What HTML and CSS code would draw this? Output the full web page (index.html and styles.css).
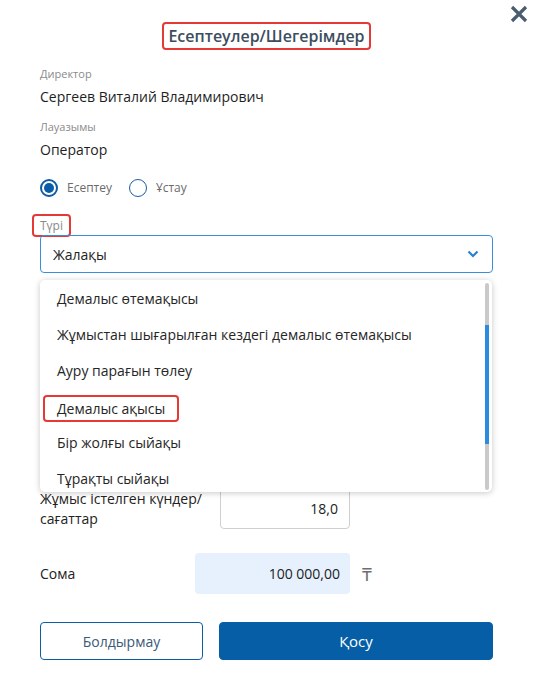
FILE: index.html
```html
<!DOCTYPE html>
<html lang="kk">
<head>
<meta charset="utf-8">
<title>Есептеулер/Шегерімдер</title>
<link rel="stylesheet" href="styles.css">
</head>
<body>
<div class="modal">
  <button class="close" aria-label="Жабу">
    <svg width="18" height="18" viewBox="0 0 18 18"><path d="M2 2 L16 16 M16 2 L2 16" stroke="#4a5d70" stroke-width="3.2" stroke-linecap="butt" fill="none"/></svg>
  </button>
  <div class="header"><span class="title mark">Есептеулер/Шегерімдер</span></div>

  <div class="field-label">Директор</div>
  <div class="field-value">Сергеев Виталий Владимирович</div>
  <div class="field-label second">Лауазымы</div>
  <div class="field-value">Оператор</div>

  <div class="radios">
    <label class="radio"><span class="circle checked"></span><span class="radio-text">Есептеу</span></label>
    <label class="radio"><span class="circle"></span><span class="radio-text">Ұстау</span></label>
  </div>

  <div class="type-label"><span class="mark small">Түрі</span></div>
  <div class="select-wrap">
    <div class="select">
      <span>Жалақы</span>
      <svg class="chev" width="12" height="8" viewBox="0 0 12 8"><path d="M1.5 1.5 L6 6 L10.5 1.5" stroke="#2a82d0" stroke-width="2.2" fill="none"/></svg>
    </div>
    <div class="dropdown">
      <div class="item">Демалыс өтемақысы</div>
      <div class="item">Жұмыстан шығарылған кездегі демалыс өтемақысы</div>
      <div class="item">Ауру парағын төлеу</div>
      <div class="item"><span class="mark item-mark">Демалыс ақысы</span></div>
      <div class="item">Бір жолғы сыйақы</div>
      <div class="item">Тұрақты сыйақы</div>
      <div class="scrollbar"><div class="thumb"></div></div>
    </div>
  </div>

  <div class="calc-row days-row">
    <div class="calc-label days-label">Жұмыс істелген күндер/<br>сағаттар</div>
    <div class="calc-input days">18,0</div>
  </div>
  <div class="calc-row sum-row">
    <div class="calc-label sum-label">Сома</div>
    <div class="calc-input sum">100 000,00</div>
    <span class="currency">₸</span>
  </div>

  <div class="buttons">
    <button class="btn cancel">Болдырмау</button>
    <button class="btn primary">Қосу</button>
  </div>
</div>
</body>
</html>
```
FILE: styles.css
```css
* { box-sizing: border-box; }
html, body { margin: 0; padding: 0; background: #fff; }
body {
  font-family: "Open Sans", "Noto Sans", "DejaVu Sans", sans-serif;
  color: #222;
}
.modal {
  position: relative;
  width: 537px;
  height: 688px;
  padding: 22px 44px 0 40px;
}
.close {
  position: absolute;
  top: 5px;
  right: 9px;
  border: 0;
  background: none;
  padding: 0;
  width: 18px;
  height: 18px;
}
.close svg { display: block; }
.header { text-align: center; }
.mark {
  display: inline-block;
  border: 2px solid #e53935;
  border-radius: 4px;
}
.title {
  font-size: 16px;
  font-weight: 600;
  line-height: 22px;
  padding: 1px 4px;
  color: #3c4d60;
}
.field-label {
  margin-top: 16px;
  font-size: 11px;
  line-height: 16px;
  color: #8a8a8a;
}
.field-label.second { margin-top: 12px; }
.field-value {
  margin-top: 5px;
  font-size: 14px;
  line-height: 20px;
  color: #1e1e1e;
}
.radios {
  margin-top: 19px;
  display: flex;
  align-items: center;
  gap: 17px;
  height: 18px;
}
.radio { display: flex; align-items: center; gap: 9px; }
.circle {
  width: 18px;
  height: 18px;
  border-radius: 50%;
  border: 1.5px solid #1a5e9e;
  position: relative;
}
.circle.checked { border: 2px solid #0b5ea6; }
.circle.checked::after {
  content: "";
  position: absolute;
  left: 2px; top: 2px;
  width: 10px; height: 10px;
  border-radius: 50%;
  background: #0b5ea6;
}
.radio-text { font-size: 12px; color: #6b6b6b; line-height: 18px; }
.type-label { margin-top: 16px; margin-bottom: -2px; }
.small {
  font-size: 12px;
  line-height: 19px;
  color: #8a8a8a;
  padding: 0 6px;
  margin-left: -8px;
}
.select-wrap { position: relative; }
.select {
  height: 38px;
  border: 1px solid #3a8fdb;
  border-radius: 4px;
  padding: 0 12px 0 12px;
  display: flex;
  align-items: center;
  justify-content: space-between;
  font-size: 14px;
  color: #222;
}
.chev { display: block; margin-right: 1px; }
.dropdown {
  position: absolute;
  top: 45px;
  left: 0;
  right: 1px;
  height: 212px;
  background: #fff;
  border-radius: 5px;
  box-shadow: 0 1px 6px rgba(0,0,0,0.22);
  overflow: hidden;
  z-index: 5;
}
.item {
  height: 36px;
  display: flex;
  align-items: center;
  padding-left: 17px;
  font-size: 14px;
  color: #262626;
  white-space: nowrap;
}
.item-mark {
  padding: 2px 12px;
  margin-left: -14px;
  line-height: 19px;
  margin-top: 4px;
}
.scrollbar {
  position: absolute;
  right: 3px;
  top: 3px;
  bottom: 2px;
  width: 4px;
  background: #c9c9c9;
  border-radius: 2px;
}
.thumb {
  position: absolute;
  left: 0; right: 0;
  top: 42px;
  height: 119px;
  background: #2b8be0;
}
.calc-row {
  display: flex;
  align-items: center;
}
.days-row { margin-top: 215px; }
.sum-row { margin-top: 24px; }
.calc-label { font-size: 14px; line-height: 20px; color: #222; }
.days-label { width: 180px; }
.sum-label { width: 155px; }
.calc-input {
  height: 41px;
  border-radius: 4px;
  font-size: 14px;
  display: flex;
  align-items: center;
  justify-content: flex-end;
  padding-right: 11px;
  color: #222;
}
.days { width: 130px; border: 1px solid #cfcfcf; }
.sum { width: 155px; background: #e6f1fd; padding-right: 10px; }
.currency { margin-left: 12px; font-size: 18px; font-weight: normal; color: #6e6e6e; }
.buttons {
  margin-top: 28px;
  display: flex;
  gap: 16px;
}
.btn {
  height: 38px;
  border-radius: 4px;
  font-family: inherit;
  font-size: 14px;
}
.cancel {
  width: 163px;
  background: #fff;
  border: 1px solid #0b5ea6;
  color: #3b5a78;
}
.primary {
  flex: 1;
  background: #055ea6;
  border: 1px solid #055ea6;
  color: #fff;
  font-size: 15px;
}
```
